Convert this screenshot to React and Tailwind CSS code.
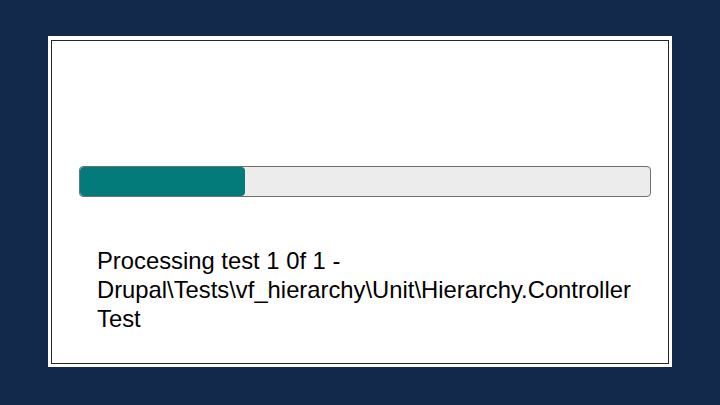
import React from 'react';

function ProgressBar({ percent }) {
  return (
    <div className="h-[31px] w-full overflow-hidden rounded-[4px] border border-[#6f6f6f] bg-[#ececec]">
      <div className="h-full rounded-[4px] bg-[#037b7b]" style={{ width: `${percent}%` }} />
    </div>
  );
}

export default function App() {
  return (
    <div className="flex h-[405px] w-[720px] bg-[#13294b] pl-[48px] pr-[48px] pt-[36px] pb-[38px]">
      <div className="flex flex-1 bg-white p-[3px] pt-[4px]">
        <div className="flex flex-1 flex-col border border-[#1f2a2a] pl-[27px] pr-[17px] pt-[125px]">
          <ProgressBar percent={29} />
          <p
            className="mt-[49px] pl-[18px] text-[23.8px] leading-[29px] text-black"
            style={{ fontFamily: '"Liberation Sans", Arial, sans-serif' }}
          >
            Processing test 1 0f 1 -<br />
            Drupal\Tests\vf_hierarchy\Unit\Hierarchy.Controller<br />
            Test
          </p>
        </div>
      </div>
    </div>
  );
}
